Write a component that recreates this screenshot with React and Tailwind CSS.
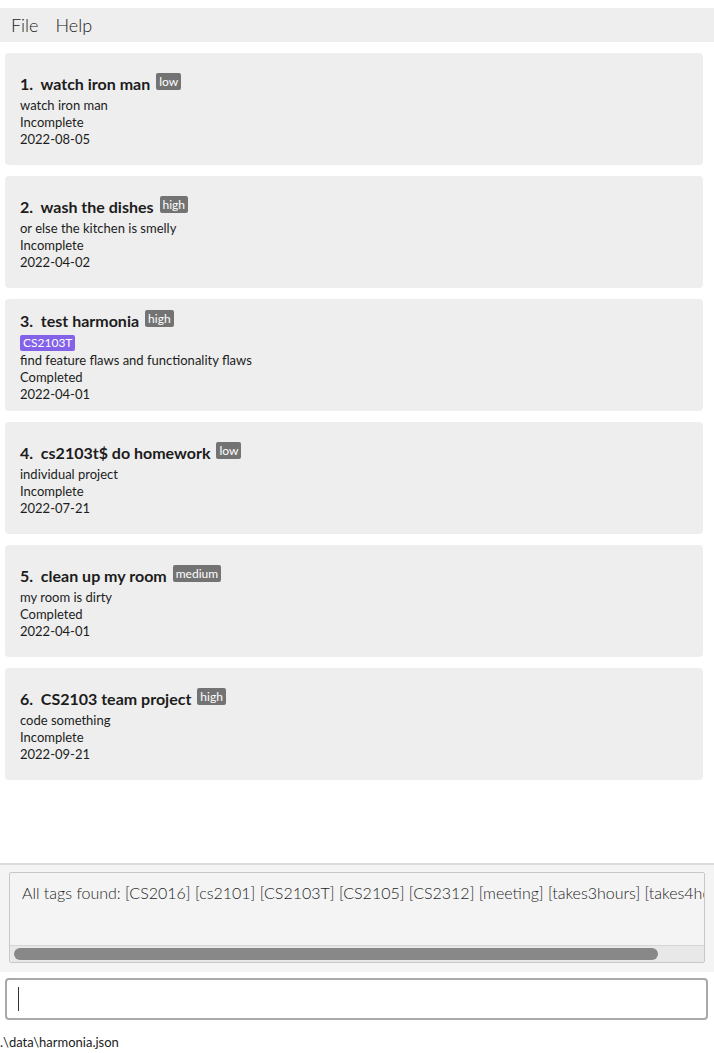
import React from "react";

const tasks = [
    { title: "watch iron man", priority: "low", desc: "watch iron man", status: "Incomplete", date: "2022-08-05", tags: [] },
    { title: "wash the dishes", priority: "high", desc: "or else the kitchen is smelly", status: "Incomplete", date: "2022-04-02", tags: [] },
    { title: "test harmonia", priority: "high", desc: "find feature flaws and functionality flaws", status: "Completed", date: "2022-04-01", tags: ["CS2103T"] },
    { title: "cs2103t$ do homework", priority: "low", desc: "individual project", status: "Incomplete", date: "2022-07-21", tags: [] },
    { title: "clean up my room", priority: "medium", desc: "my room is dirty", status: "Completed", date: "2022-04-01", tags: [] },
    { title: "CS2103 team project", priority: "high", desc: "code something", status: "Incomplete", date: "2022-09-21", tags: [] },
];

const font = { fontFamily: "Lato, 'Open Sans', sans-serif" };

const TaskCard = ({ task, index }) => (
    <div className="h-[112px] shrink-0 rounded-[4px] bg-[#eeeeee] px-[15px] flex flex-col justify-center text-[#1c1c1c]">
        <div className="flex items-start h-[26px]">
            <span className="text-[16px] font-bold leading-[26px] whitespace-pre">{index}.  {task.title}</span>
            <span className="ml-[6px] mt-[2px] h-[17px] leading-[17px] px-[3px] rounded-[2px] bg-[#737373] text-white text-[12px]">
                {task.priority}
            </span>
        </div>
        {task.tags.length > 0 && (
            <div className="flex items-center h-[18px] gap-1">
                {task.tags.map(tag => (
                    <span key={tag} className="h-[16px] leading-[16px] px-[3px] rounded-[2px] bg-[#8361e9] text-white text-[12px]">{tag}</span>
                ))}
            </div>
        )}
        <div className="text-[13px] leading-[17px]">{task.desc}</div>
        <div className="text-[13px] leading-[17px]">{task.status}</div>
        <div className="text-[13px] leading-[17px]">{task.date}</div>
    </div>
);

export default function App() {
    return (
        <div className="h-[1053px] w-[714px] flex flex-col bg-white overflow-hidden" style={font}>
            <div className="h-[8px] shrink-0" />
            <div className="h-[34px] shrink-0 bg-[#eeeeee] flex items-center pl-[11px] gap-[17px] text-[18px] font-light text-[#222]">
                <span>File</span>
                <span>Help</span>
            </div>
            <div className="flex-1 flex flex-col gap-[11px] pt-[11px] pl-[5px] pr-[11px]">
                {tasks.map((task, i) => (
                    <TaskCard key={i} task={task} index={i + 1} />
                ))}
            </div>
            <div className="shrink-0 border-t-2 border-[#dcdcdc] bg-[#f4f4f4] pt-[7px] pb-[9px] pl-[9px] pr-[9px]">
                <div className="h-[91px] border border-[#c8c8c8] rounded-[2px] bg-[#f4f4f4] flex flex-col overflow-hidden">
                    <div className="flex-1 pl-[12px] pt-[8px] text-[16px] font-light text-[#1e1e1e] whitespace-nowrap overflow-x-auto overflow-y-hidden [scrollbar-width:none]">
                        All tags found: [CS2016] [cs2101] [CS2103T] [CS2105] [CS2312] [meeting] [takes3hours] [takes4hours] [urgent]
                    </div>
                    <div className="h-[17px] bg-[#e8e8e8] border-t border-[#d6d6d6] flex items-center pl-[4px]">
                        <div className="h-[12px] w-[644px] rounded-full bg-[#888888]" />
                    </div>
                </div>
            </div>
            <div className="shrink-0 pt-[6px] pl-[5px] pr-[6px]">
                <div className="h-[42px] border-2 border-[#a9a9a9] rounded-[4px] bg-white flex items-center pl-[11px]">
                    <div className="w-[1px] h-[24px] bg-[#333]" />
                </div>
            </div>
            <div className="shrink-0 h-[33px] flex items-center text-[13px] text-[#222] pt-[12px]">
                {".\\data\\harmonia.json"}
            </div>
        </div>
    );
}
